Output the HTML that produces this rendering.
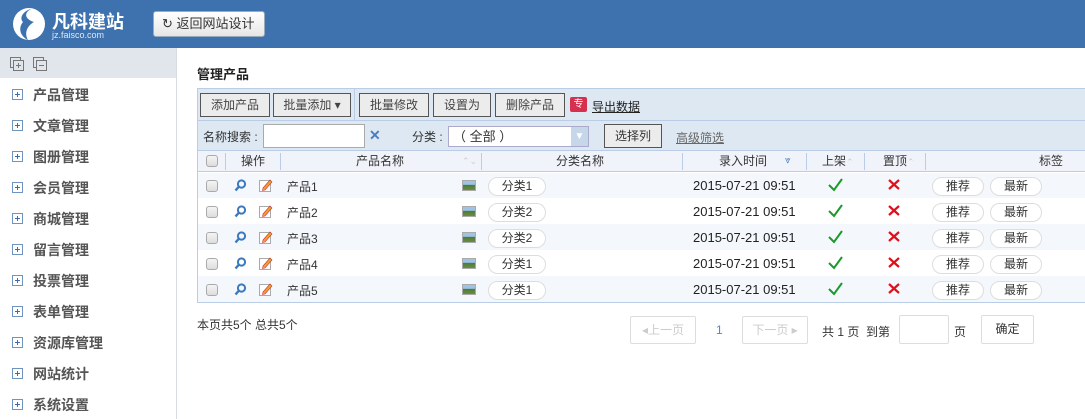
<!DOCTYPE html>
<html><head><meta charset="utf-8"><style>
*{margin:0;padding:0;box-sizing:border-box}
body{width:1085px;height:419px;overflow:hidden;background:#fff;font-family:"Liberation Sans","Noto Sans CJK SC",sans-serif;font-size:12px;color:#333;position:relative}
.a{position:absolute}
.hdr{left:0;top:0;width:1085px;height:48px;background:#3d72ae}
.side{left:0;top:48px;width:177px;height:371px;border-right:1px solid #d8dde4;background:#fff}
.stop{left:0;top:48px;width:176px;height:30px;background:#e1e6ed}
.mi{left:12px;font-size:14px;font-weight:bold;color:#555;height:20px;line-height:20px}
.pl{display:inline-block;width:11px;height:11px;border:1px solid #6e94bf;position:relative;vertical-align:middle;margin-right:10px;top:-2px}
.pl:before{content:"";position:absolute;left:2px;top:4px;width:5px;height:1px;background:#3d6ea8}
.pl:after{content:"";position:absolute;left:4px;top:2px;width:1px;height:5px;background:#3d6ea8}
.btn{position:absolute;top:93px;height:24px;border:1px solid #555;background:#ececec;font-size:12px;color:#444;text-align:center;line-height:22px}
.cb{position:absolute;width:12px;height:12px;border:1px solid #aaa;border-radius:3px;background:linear-gradient(#f4f4f4,#ddd)}
.pill{position:absolute;height:19px;border:1px solid #ddd;border-radius:10px;background:#fff;text-align:center;line-height:17px;font-size:12px;color:#333}
.th{position:absolute;top:150px;height:22px;line-height:22px;color:#333;font-size:12px}
.sep{position:absolute;top:153px;width:1px;height:17px;background:#b9cde6}
.pg{position:absolute;top:316px;height:28px;border:1px solid #ddd;border-radius:2px;line-height:26px;text-align:center;color:#ccc}
</style></head><body>
<div class="a hdr"></div>
<svg class="a" style="left:10px;top:6px" width="40" height="36" viewBox="0 0 40 36"><circle cx="19" cy="18" r="16" fill="#fff"/><path d="M21 3 C12 8 17 14 24 16 C17 20 14 27 18 34 C10 30 8 22 13 16 C9 12 13 5 21 3Z" fill="#3d72ae"/></svg>
<div class="a" style="left:52px;top:8px;font-size:18px;font-weight:bold;color:#fff">凡科建站</div>
<div class="a" style="left:52px;top:30px;font-size:9px;color:#dfe8f3">jz.faisco.com</div>
<div class="a" style="left:153px;top:11px;width:112px;height:26px;border:1px solid #9ab;border-radius:3px;background:linear-gradient(#fff,#e6e6e6);font-size:13px;color:#333;line-height:24px;padding-left:8px">↻ 返回网站设计</div>
<div class="a side"></div>
<div class="a stop"></div>
<svg class="a" style="left:10px;top:57px" width="40" height="16"><g fill="none" stroke="#777"><rect x="0.5" y="0.5" width="10" height="10"/><rect x="3.5" y="3.5" width="10" height="10" fill="#e1e6ed"/><path d="M6 8.5h5M8.5 6v5"/><rect x="23.5" y="0.5" width="10" height="10"/><rect x="26.5" y="3.5" width="10" height="10" fill="#e1e6ed"/><path d="M29 8.5h5"/></g></svg>
<div class="a mi" style="top:85px"><span class="pl"></span>产品管理</div>
<div class="a mi" style="top:116px"><span class="pl"></span>文章管理</div>
<div class="a mi" style="top:147px"><span class="pl"></span>图册管理</div>
<div class="a mi" style="top:178px"><span class="pl"></span>会员管理</div>
<div class="a mi" style="top:209px"><span class="pl"></span>商城管理</div>
<div class="a mi" style="top:240px"><span class="pl"></span>留言管理</div>
<div class="a mi" style="top:271px"><span class="pl"></span>投票管理</div>
<div class="a mi" style="top:302px"><span class="pl"></span>表单管理</div>
<div class="a mi" style="top:333px"><span class="pl"></span>资源库管理</div>
<div class="a mi" style="top:364px"><span class="pl"></span>网站统计</div>
<div class="a mi" style="top:395px"><span class="pl"></span>系统设置</div>

<div class="a" style="left:197px;top:64px;font-size:13px;font-weight:bold;color:#222">管理产品</div>
<div class="a" style="left:197px;top:88px;width:888px;height:215px;border:1px solid #b9cde6;border-right:none"></div>
<div class="a" style="left:198px;top:89px;width:887px;height:61px;background:#dde8f2"></div>
<div class="a" style="left:198px;top:120px;width:887px;height:1px;background:#b9cde6"></div>
<div class="a" style="left:354px;top:89px;width:1px;height:31px;background:#b9cde6"></div>
<div class="btn" style="left:200px;width:70px">添加产品</div>
<div class="btn" style="left:273px;width:78px">批量添加 ▾</div>
<div class="btn" style="left:359px;width:70px">批量修改</div>
<div class="btn" style="left:433px;width:58px">设置为</div>
<div class="btn" style="left:495px;width:70px">删除产品</div>
<div class="a" style="left:570px;top:97px;width:17px;height:15px;background:#d6304f;border-radius:2px;color:#fff;font-size:10px;text-align:center;line-height:15px">专</div>
<div class="a" style="left:592px;top:98px;text-decoration:underline;color:#222">导出数据</div>
<div class="a" style="left:203px;top:128px;color:#333">名称搜索 :</div>
<div class="a" style="left:263px;top:124px;width:102px;height:24px;border:1px solid #aaa;background:#fff"></div>
<div class="a" style="left:369px;top:127px;color:#4a7fbf;font-weight:bold;font-size:14px">✕</div>
<div class="a" style="left:412px;top:128px;color:#333">分类 :</div>
<div class="a" style="left:448px;top:126px;width:141px;height:21px;border:1px solid #aac;background:#fff;padding-left:4px;line-height:19px;color:#333;font-size:13px">（ 全部 ）</div>
<div class="a" style="left:571px;top:127px;width:17px;height:19px;background:#c7d7ea;color:#fff;font-size:10px;text-align:center;line-height:19px">▼</div>
<div class="a" style="left:604px;top:124px;width:58px;height:24px;border:1px solid #555;background:#ececec;text-align:center;line-height:22px">选择列</div>
<div class="a" style="left:676px;top:129px;text-decoration:underline;color:#666">高级筛选</div>
<div class="a" style="left:198px;top:150px;width:887px;height:22px;background:#f0f4fa;border-top:1px solid #b9cde6;border-bottom:1px solid #b9cde6"></div>
<div class="cb" style="left:206px;top:155px"></div>
<div class="sep" style="left:225px"></div><div class="sep" style="left:280px"></div><div class="sep" style="left:481px"></div><div class="sep" style="left:682px"></div><div class="sep" style="left:806px"></div><div class="sep" style="left:864px"></div><div class="sep" style="left:925px"></div>
<div class="th" style="left:241px">操作</div>
<div class="th" style="left:356px">产品名称</div><div class="th" style="left:462px;color:#ccc;font-size:9px">⌃⌄</div>
<div class="th" style="left:556px">分类名称</div>
<div class="th" style="left:719px">录入时间</div><div class="th" style="left:785px;color:#4a7fbf;font-size:10px">⩔</div>
<div class="th" style="left:822px">上架<span style="color:#ccc;font-size:9px">⌃</span></div>
<div class="th" style="left:883px">置顶<span style="color:#ccc;font-size:9px">⌃</span></div>
<div class="th" style="left:1039px">标签</div>

<div class="a" style="left:198px;top:173px;width:887px;height:25px;background:#f4f8fd"></div>
<div class="a" style="left:198px;top:224px;width:887px;height:26px;background:#f4f8fd"></div>
<div class="a" style="left:198px;top:276px;width:887px;height:26px;background:#f4f8fd"></div>

<div id="rows"></div>
<script>
var cats=["分类1","分类2","分类2","分类1","分类1"],h="";
for(var i=0;i<5;i++){var y=173+i*26;
h+='<div class="cb" style="left:206px;top:'+(y+7)+'px"></div>'+
'<svg class="a" style="left:234px;top:'+(y+6)+'px" width="13" height="13"><circle cx="7.5" cy="5" r="3.6" fill="none" stroke="#3c78be" stroke-width="2"/><path d="M5 7.5 L1.5 11.5" stroke="#3c78be" stroke-width="2.4"/></svg>'+
'<svg class="a" style="left:259px;top:'+(y+5)+'px" width="14" height="14"><rect x="0.5" y="2.5" width="11" height="11" fill="#fff" stroke="#aaa"/><path d="M4 10 L11 2 L13 4 L6 12 L3.5 12.5Z" fill="#f0a030" stroke="#c33" stroke-width="0.6"/></svg>'+
'<div class="a" style="left:287px;top:'+(y+5)+'px;color:#333">产品'+(i+1)+'</div>'+
'<div class="a" style="left:462px;top:'+(y+7)+'px;width:14px;height:11px;border:1px solid #aaa;background:linear-gradient(#9ec3e6 40%,#4d7a3a 45%,#6a8e3e)"></div>'+
'<div class="pill" style="left:488px;top:'+(y+4)+'px;width:58px">'+cats[i]+'</div>'+
'<div class="a" style="left:693px;top:'+(y+5)+'px;font-size:13px;color:#222">2015-07-21 09:51</div>'+
'<svg class="a" style="left:828px;top:'+(y+5)+'px" width="15" height="14"><path d="M1 7 L6 12 L14 1" fill="none" stroke="#1a9a2a" stroke-width="2"/></svg>'+
'<svg class="a" style="left:888px;top:'+(y+6)+'px" width="12" height="11"><path d="M1 1L11 10M11 1L1 10" stroke="#e0101a" stroke-width="2.2"/></svg>'+
'<div class="pill" style="left:932px;top:'+(y+4)+'px;width:52px">推荐</div>'+
'<div class="pill" style="left:990px;top:'+(y+4)+'px;width:52px">最新</div>';}
document.getElementById('rows').innerHTML=h;
</script>
<div class="a" style="left:197px;top:316px;color:#333">本页共5个 总共5个</div>
<div class="pg" style="left:630px;width:66px">◂上一页</div>
<div class="a" style="left:716px;top:323px;color:#4a8ad4">1</div>
<div class="pg" style="left:742px;width:66px">下一页 ▸</div>
<div class="a" style="left:822px;top:323px;color:#333">共 1 页&nbsp; 到第</div>
<div class="pg" style="left:899px;top:315px;width:50px;height:29px"></div>
<div class="a" style="left:954px;top:323px;color:#333">页</div>
<div class="pg" style="left:981px;top:315px;width:53px;height:29px;color:#333">确定</div>
</body></html>
